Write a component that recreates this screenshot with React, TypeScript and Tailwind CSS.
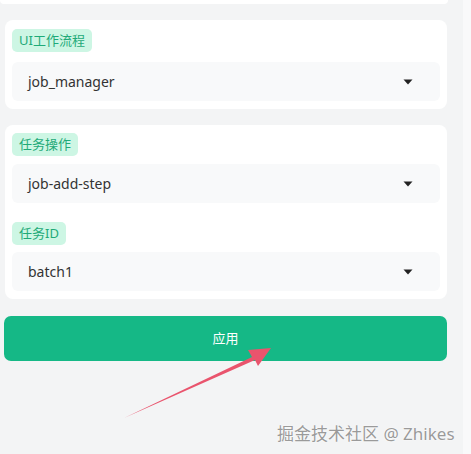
function Caret() {
  return (
    <svg width="10" height="6" viewBox="0 0 10 6" className="shrink-0">
      <path d="M0.5 0.5 L9.5 0.5 L5 5.5 Z" fill="#222" />
    </svg>
  );
}

function Badge({ children }: { children: React.ReactNode }) {
  return (
    <div className="flex">
      <div className="h-[23px] px-[7px] flex items-center rounded-[5px] bg-[#cdf6e4] text-[13px] text-[#1faa78]">
        {children}
      </div>
    </div>
  );
}

function Select({ value }: { value: string }) {
  return (
    <div className="h-[39px] mr-[7px] flex items-center justify-between pl-[16px] pr-[27px] rounded-[6px] bg-[#f8f9fa] text-[14px] text-[#333]">
      <span>{value}</span>
      <Caret />
    </div>
  );
}

export default function App() {
  return (
    <div
      className="relative w-[471px] h-[454px] overflow-hidden flex bg-[#f3f4f5]"
      style={{ fontFamily: '"Noto Sans", "Noto Sans CJK SC", sans-serif' }}
    >
      <div className="w-[463px] flex flex-col">
        {/* top card edge */}
        <div className="w-[448px] h-[4px] bg-white rounded-b-[8px]" />

        {/* workflow card */}
        <div className="mt-[16px] ml-[5px] w-[442px] bg-white rounded-[8px] pt-[9px] pb-[8px] pl-[7px] flex flex-col gap-[10px]">
          <Badge>UI工作流程</Badge>
          <Select value="job_manager" />
        </div>

        {/* task card */}
        <div className="mt-[16px] ml-[5px] w-[442px] bg-white rounded-[8px] pt-[8px] pb-[8px] pl-[7px] flex flex-col">
          <Badge>任务操作</Badge>
          <div className="mt-[8px]">
            <Select value="job-add-step" />
          </div>
          <div className="mt-[19px]">
            <Badge>任务ID</Badge>
          </div>
          <div className="mt-[7px]">
            <Select value="batch1" />
          </div>
        </div>

        <button className="mt-[17px] ml-[4px] w-[443px] h-[45px] rounded-[7px] bg-[#15b886] text-white text-[13px] flex items-center justify-center">
          应用
        </button>
      </div>
      <div className="flex-1 bg-[#f9f9fa]" />

      {/* annotation arrow */}
      <svg className="absolute left-0 top-0 pointer-events-none" width="471" height="454">
        <path d="M124 418 L252 357 L248 350 L271 348 L258 366 L255 360 Z" fill="#e9546d" />
      </svg>

      {/* watermark */}
      <div
        className="absolute left-[277px] top-[421px] text-[17px] text-[#9a9a9a] whitespace-nowrap"
        style={{ textShadow: "0 0 1px #fff, 0 0 2px #fff" }}
      >
        掘金技术社区 @ Zhikes
      </div>
    </div>
  );
}
